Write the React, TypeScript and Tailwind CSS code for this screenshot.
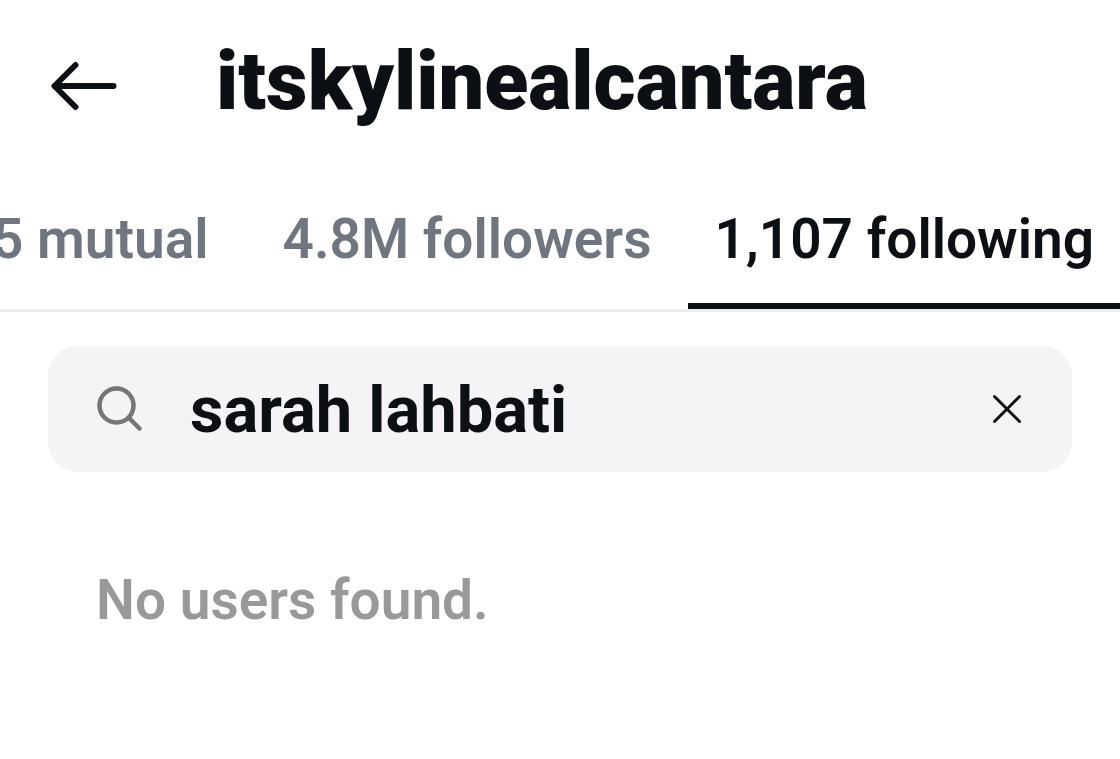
import { useState } from "react";

const tabs = ["5 mutual", "4.8M followers", "1,107 following"];

function BackIcon() {
  return (
    <svg viewBox="0 0 68 50" className="h-[50px] w-[68px]" fill="none" stroke="currentColor" strokeWidth="6" strokeLinecap="round" strokeLinejoin="round" aria-hidden="true">
      <path d="M63.500 25H4.500M25.500 4 4.500 25l21 21" />
    </svg>
  );
}

function SearchIcon() {
  return (
    <svg viewBox="0 0 48 48" className="size-12 shrink-0" fill="none" stroke="currentColor" strokeWidth="4.5" strokeLinecap="round" aria-hidden="true">
      <circle cx="20.500" cy="20.500" r="17" />
      <path d="m33 33 10.500 10.500" />
    </svg>
  );
}

function CloseIcon() {
  return (
    <svg viewBox="0 0 32 32" className="size-8" fill="none" stroke="currentColor" strokeWidth="3" strokeLinecap="round" aria-hidden="true">
      <path d="m3.500 3.500 25 25M28.500 3.500l-25 25" />
    </svg>
  );
}

export default function App() {
  const [active, setActive] = useState(2);
  const [query, setQuery] = useState("sarah lahbati");

  return (
    <main className="min-h-screen overflow-hidden bg-white font-['Roboto',sans-serif] text-[#0c1014]">
      <header className="flex h-[172px] items-center gap-[98px] px-[50px]">
        <button type="button" aria-label="Back" className="shrink-0">
          <BackIcon />
        </button>
        <h1 className="pb-2 text-[81px] leading-[96px] font-black">itskylinealcantara</h1>
      </header>

      <nav className="flex h-[140px] justify-end border-b-[3px] border-[#ededee]">
        {tabs.map((tab, index) => (
          <button
            key={tab}
            type="button"
            onClick={() => setActive(index)}
            aria-current={index === active ? "page" : undefined}
            className={
              index === active
                ? "shrink-0 border-b-[6px] border-[#0c1014] px-[26px] pt-[3px] text-[55px] font-semibold whitespace-nowrap"
                : "shrink-0 border-b-[6px] border-transparent px-[37px] pt-[3px] text-[55px] font-semibold whitespace-nowrap text-[#6f767f]"
            }
          >
            {tab}
          </button>
        ))}
      </nav>

      <div className="px-12 pt-[34px]">
        <div className="flex h-[126px] items-center rounded-[30px] bg-[#f4f4f6] pr-[49px] pl-12 text-[#737578]">
          <SearchIcon />
          <input
            type="text"
            aria-label="Search users"
            value={query}
            onChange={(event) => setQuery(event.target.value)}
            className="ml-[46px] min-w-0 flex-1 bg-transparent pt-1 text-[65px] font-bold text-[#0c1014] outline-none"
          />
          <button type="button" aria-label="Clear search" onClick={() => setQuery("")} className="text-[#0c1014]">
            <CloseIcon />
          </button>
        </div>
        <p className="px-12 pt-[92px] text-[55px] leading-[72px] font-semibold text-[#999999]">No users found.</p>
      </div>
    </main>
  );
}
